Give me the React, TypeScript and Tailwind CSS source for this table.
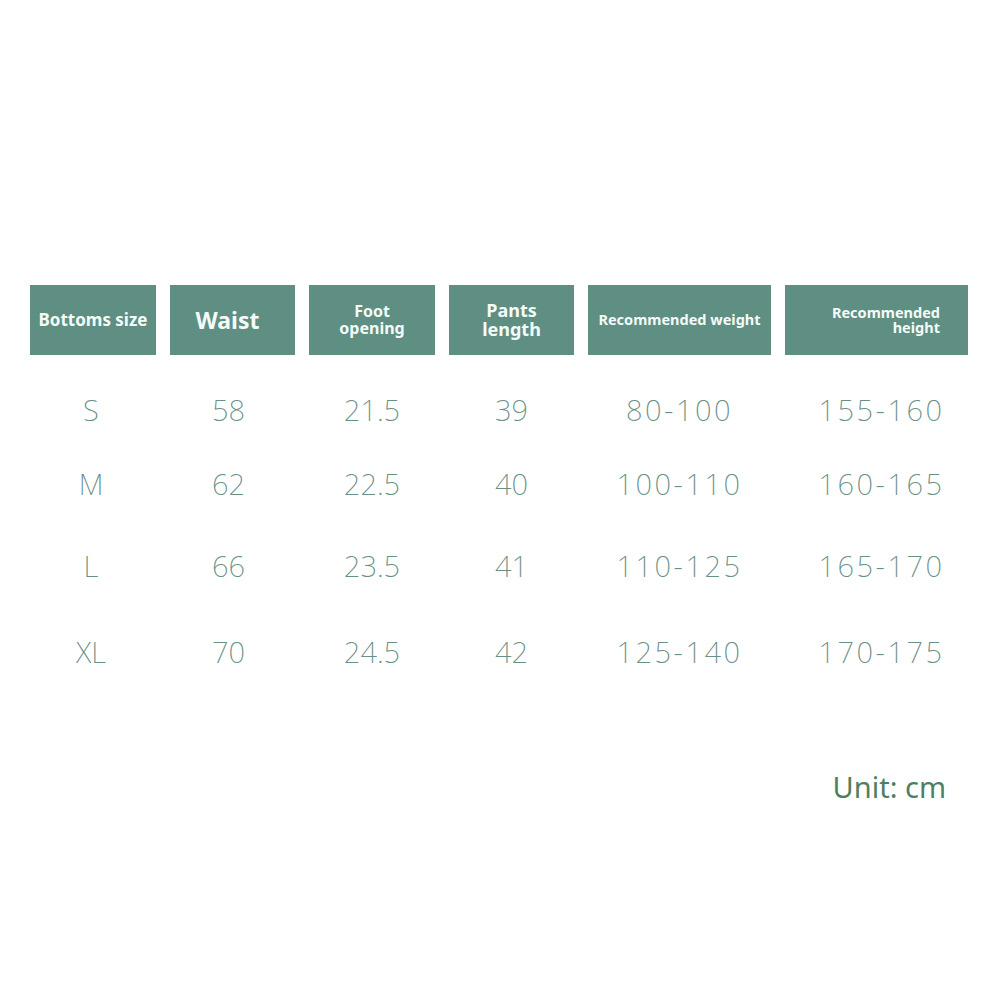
const headers = [
  { label: 'Bottoms size', cls: 'text-[17px] justify-center' },
  { label: 'Waist', cls: 'text-[23px] justify-center pr-[10px]' },
  { label: 'Foot\nopening', cls: 'text-[16px] leading-[17px] justify-center' },
  { label: 'Pants\nlength', cls: 'text-[18px] leading-[19px] justify-center' },
  { label: 'Recommended weight', cls: 'text-[14.5px] justify-center' },
  { label: 'Recommended\nheight', cls: 'text-[14.5px] leading-[15px] justify-end pr-[28px] text-right' },
];

const rows = [
  { h: 'h-[70px]', cells: ['S', '58', '21.5', '39', '80-100', '155-160'] },
  { h: 'h-[78px]', cells: ['M', '62', '22.5', '40', '100-110', '160-165'] },
  { h: 'h-[86px]', cells: ['L', '66', '23.5', '41', '110-125', '165-170'] },
  { h: 'h-[86px]', cells: ['XL', '70', '24.5', '42', '125-140', '170-175'] },
];

const cellPad = ['pr-[4px]', 'pr-[8px]', '', '', '', 'pl-[10px]'];

const cols = 'grid grid-cols-[126px_125px_126px_125px_183px_183px] gap-x-[14px]';

export default function App() {
  return (
    <div className="w-[1000px] h-[1000px] bg-white pt-[285px] pl-[30px] font-['Noto_Sans','Open_Sans',sans-serif]">
      <div className={cols}>
        {headers.map((h, i) => (
          <div
            key={i}
            className={`h-[70px] bg-[#5e8f82] text-[#f4fbf8] font-bold flex items-center whitespace-pre-line ${h.cls} ${i === 0 ? '' : 'text-center'}`}
          >
            {h.label}
          </div>
        ))}
      </div>
      <div className="mt-[20px]">
        {rows.map((r, i) => (
          <div key={i} className={`${cols} ${r.h}`}>
            {r.cells.map((c, j) => (
              <div
                key={j}
                className={`flex items-center justify-center text-[29px] font-extralight text-[#6a8f86] ${cellPad[j]} ${j >= 4 ? 'tracking-[2.5px]' : ''}`}
              >
                {c}
              </div>
            ))}
          </div>
        ))}
      </div>
      <div className="mt-[70px] w-[916px] text-right text-[29px] text-[#4f7f63]">Unit: cm</div>
    </div>
  );
}
